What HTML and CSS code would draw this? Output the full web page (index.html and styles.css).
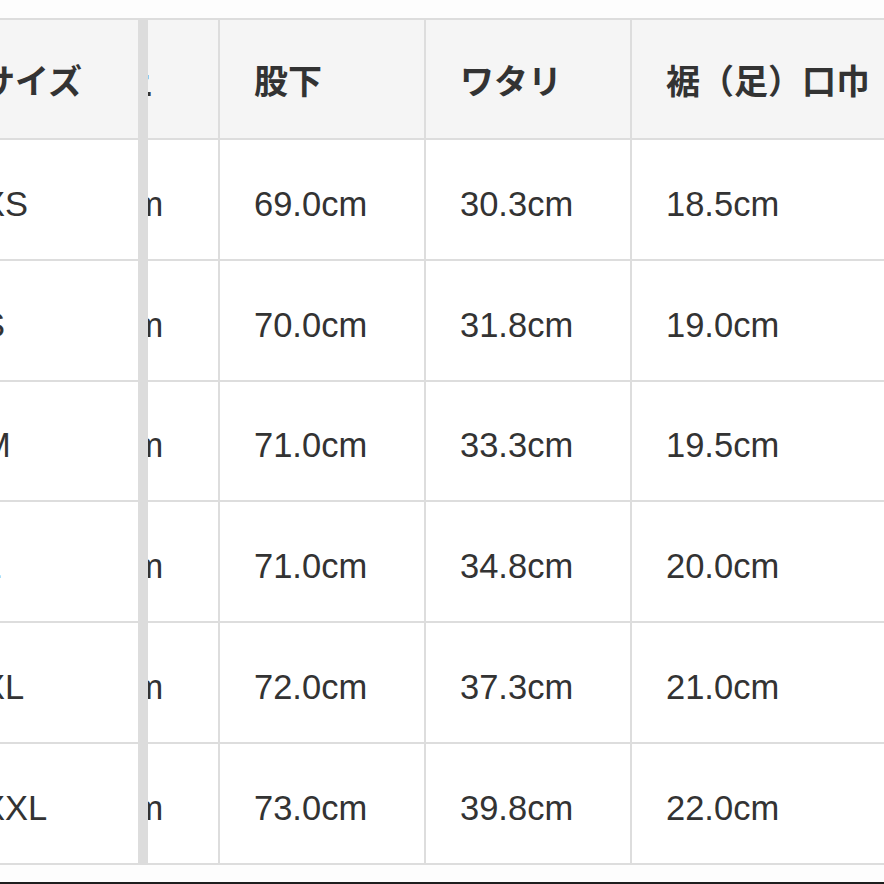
FILE: index.html
```html
<!DOCTYPE html>
<html lang="ja">
<head>
<meta charset="utf-8">
<title>サイズ表</title>
<link rel="stylesheet" href="styles.css">
</head>
<body>
<div class="viewport">
  <div class="table">
    <div class="bar"></div>

    <div class="cell head sticky">サイズ</div>
    <div class="cell head clip"><span>前股上</span></div>
    <div class="cell head">股下</div>
    <div class="cell head">ワタリ</div>
    <div class="cell head last">裾（足）口巾</div>

    <div class="cell sticky">XS</div>
    <div class="cell clip"><span>26.0cm</span></div>
    <div class="cell">69.0cm</div>
    <div class="cell">30.3cm</div>
    <div class="cell last">18.5cm</div>

    <div class="cell sticky">S</div>
    <div class="cell clip"><span>26.5cm</span></div>
    <div class="cell">70.0cm</div>
    <div class="cell">31.8cm</div>
    <div class="cell last">19.0cm</div>

    <div class="cell sticky">M</div>
    <div class="cell clip"><span>27.0cm</span></div>
    <div class="cell">71.0cm</div>
    <div class="cell">33.3cm</div>
    <div class="cell last">19.5cm</div>

    <div class="cell sticky">L</div>
    <div class="cell clip"><span>27.5cm</span></div>
    <div class="cell">71.0cm</div>
    <div class="cell">34.8cm</div>
    <div class="cell last">20.0cm</div>

    <div class="cell sticky">XL</div>
    <div class="cell clip"><span>28.0cm</span></div>
    <div class="cell">72.0cm</div>
    <div class="cell">37.3cm</div>
    <div class="cell last">21.0cm</div>

    <div class="cell sticky">XXL</div>
    <div class="cell clip"><span>28.5cm</span></div>
    <div class="cell">73.0cm</div>
    <div class="cell">39.8cm</div>
    <div class="cell last">22.0cm</div>
  </div>
  <div class="edge"></div>
</div>
</body>
</html>
```

FILE: styles.css
```css
html, body {
  margin: 0;
  padding: 0;
  background: #ffffff;
}

.viewport {
  width: 884px;
  height: 884px;
  overflow: hidden;
  display: flex;
  flex-direction: column;
  background: #fdfdfd;
}

.table {
  margin-top: 18px;
  margin-left: -54px;
  display: grid;
  grid-template-columns: 194px 8px 72px 206px 206px 270px;
  grid-template-rows: 120px repeat(6, 120.8px);
  border-top: 2px solid #dddddd;
  width: max-content;
  background: #ffffff;
}

.bar {
  grid-column: 2;
  grid-row: 1 / -1;
  background: #dcdcdc;
}

.cell {
  box-sizing: border-box;
  border-bottom: 2px solid #dddddd;
  border-right: 2px solid #dddddd;
  padding: 10px 0 0 34px;
  display: flex;
  align-items: center;
  white-space: nowrap;
  overflow: hidden;
  font-family: "Liberation Sans", Arial, "Noto Sans CJK JP", sans-serif;
  font-size: 34.5px;
  color: #333333;
  background: #ffffff;
}

.cell.sticky {
  grid-column: 1;
  padding-left: 36px;
}

.cell.clip {
  grid-column: 3;
  padding-left: 0;
}

.cell.clip span {
  display: block;
  margin-left: -98px;
}

.cell.last {
  border-right: none;
}

.cell.head {
  padding-top: 0;
  background: #f5f5f5;
  font-family: "Noto Sans CJK JP", "Noto Sans CJK SC", sans-serif;
  font-weight: 700;
  font-size: 34px;
  color: #333333;
}

.cell.head.sticky {
  padding-left: 35px;
}

.edge {
  margin-top: auto;
  height: 2px;
  background: #1e1e1e;
}
```
